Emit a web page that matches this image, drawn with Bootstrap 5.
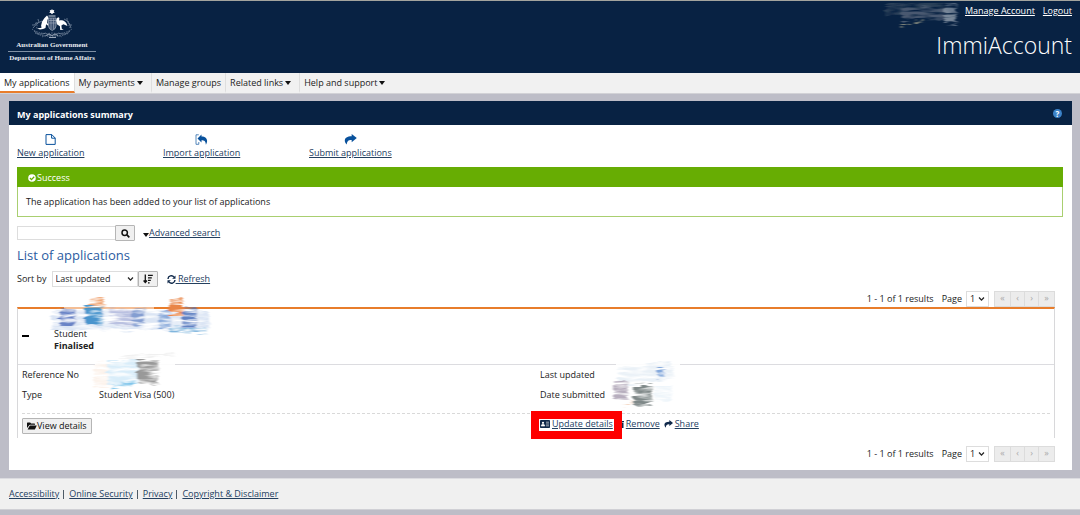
<!DOCTYPE html>
<html lang="en">
<head>
<meta charset="utf-8">
<meta name="viewport" content="width=device-width, initial-scale=1">
<title>ImmiAccount - My applications summary</title>
<link href="https://cdn.jsdelivr.net/npm/bootstrap@5.3.0/dist/css/bootstrap.min.css" rel="stylesheet">
<style>
:root { --navy: #082243; --link: #24405f; --orange: #e87d2b; }
body { font: 9px/12px "Open Sans", "Noto Sans", sans-serif; color: #222; background: #bdbdc7; }
a { color: var(--link); text-underline-offset: 1px; }
svg { display: block; flex: none; }
.site-head { background: var(--navy); border-top: 1px solid #a3a49e; height: 73px; }
.site-head a { color: #fff; }
.crest { width: 88px; padding-top: 8px; color: #e8ecf1; font: bold 7px/11px "Liberation Serif", serif; white-space: nowrap; }
.crest-dept { border-top: 1px solid #8090a4; padding-top: 1px; }
.brand-name { font-size: 23px; line-height: 30px; font-weight: 300; color: #fff; margin-top: 13px; }
.main-nav { background: #f1f1f1; border-bottom: 1px solid #d2d2d6; height: 21px; }
.main-nav .nav-link { color: #222; padding: 4px 4px 2px; height: 20px; border-right: 1px solid #dedede; border-bottom: 2px solid transparent; white-space: nowrap; }
.main-nav .nav-link.active { background: #fff; border-bottom-color: var(--orange); }
.main-nav .menu { padding-right: 8px; }
.main-nav li:last-child .nav-link { border-right: 0; }
.caret { display: inline-block; border: 3px solid transparent; border-top: 4px solid #111; border-bottom: 0; margin-left: 2px; vertical-align: 1px; }
.panel { background: #fff; margin: 7px 8px 0 9px; padding-bottom: 8px; }
.panel-head { background: var(--navy); color: #fff; height: 24px; padding: 0 10px 0 8px; }
.panel-head h1 { font-size: 9px; line-height: 12px; font-weight: 700; margin: 4px 0 0; }
.help { width: 9px; height: 9px; border-radius: 50%; background: #3b82c9; color: #fff; font-size: 8px; line-height: 9px; font-weight: 700; text-align: center; border: 0; padding: 0; }
.panel-body { padding: 9px 9px 0 8px; }
.action { width: 146px; padding-bottom: 8px; }
.action a { display: inline-flex; flex-direction: column; align-items: center; gap: 2px; white-space: nowrap; }
.action svg { color: #08519c; }
.notice { border: 1px solid #a9cf70; }
.notice-head { background: #67ad03; color: #fff; height: 20px; margin: -1px -1px 0; padding: 1px 11px 0; gap: 1px; }
.notice-text { padding: 9px 8px 8px; }
.search-box { width: 98px; height: 14px; border: 1px solid #ddd; border-right: 0; padding: 0 4px; font-size: 9px; }
.tool-btn { border: 1px solid #b5b5b5; border-radius: 1px; background: #f0f0f0; color: #111; height: 16px; line-height: 12px; padding: 0 4px; font-size: 9px; display: inline-flex; align-items: center; justify-content: center; }
.icon-btn { width: 20px; }
.list-title { font-size: 13px; line-height: 18px; font-weight: 400; color: #2b5c9f; margin: 5px 0 7px; }
.pick { appearance: none; border: 1px solid #ddd; border-radius: 0; height: 16px; font-size: 9px; line-height: 12px; padding: 0 3px; color: #222; background: #fff; }
.pick-wrap { display: grid; align-items: center; }
.pick-wrap > * { grid-area: 1 / 1; }
.pick-wrap svg { justify-self: end; margin-right: 4px; pointer-events: none; }
.sort-pick { width: 86px; }
.sort-row { gap: 5px; }
.page-pick { width: 23px; }
.pager-row { margin-right: 8px; height: 16px; }
.pager { margin-left: 6px; }
.pager button { width: 15px; height: 16px; border: 1px solid #dcdcdc; background: #ececec; color: #aaa; padding: 0 0 2px; font-size: 9px; line-height: 12px; margin-left: -1px; }
.pager button:first-child, .pager button:last-child { width: 17px; }
.results { border: 1px solid #d8d8da; border-top: 2px solid var(--orange); border-bottom: 0; margin-right: 8px; position: relative; }
.result-head { height: 55px; padding: 19px 5px 0 4px; gap: 25px; }
.toggle { width: 7px; height: 9px; border: 0; border-bottom: 2px solid #000; background: none; padding: 0; }
.result-body { border-top: 1px solid #dcdce0; padding: 0 4px; }
.facts { padding: 0 0 8px; }
.facts dl { margin: 0; display: grid; grid-template-columns: 77px 1fr; line-height: 20px; }
.facts dl * { margin: 0; font-weight: 400; }
.facts dd { min-height: 20px; }
.actions-row { border-top: 1px dashed #d9d9d9; padding: 4px 0; min-height: 25px; }
.actions-row .item-link { display: inline-flex; align-items: center; gap: 2px; color: var(--link); text-decoration: none; }
.actions-row .item-link span { text-decoration: underline; }
.actions-row .item-link svg { color: #10294a; }
.marker { position: absolute; inset: -7px -9px -9px; border: 8px solid #fe0000; pointer-events: none; }
.smudge { position: absolute; pointer-events: none; }
.site-foot { background: #f0f0f0; border-top: 1px solid #dcdce0; border-bottom: 1px solid #d0d0d5; margin-top: 8px; padding: 0 9px; height: 32px; }
.foot-sep { width: 1px; height: 9px; background: #4d5a66; margin: 0 5px 0 4px; }
</style>
</head>
<body>
<svg width="0" height="0" class="position-absolute" aria-hidden="true">
  <defs>
    <filter id="rough" x="-10%" y="-20%" width="120%" height="140%">
      <feTurbulence type="fractalNoise" baseFrequency="0.05 0.35" numOctaves="3" seed="4" result="n"/>
      <feDisplacementMap in="SourceGraphic" in2="n" scale="9" xChannelSelector="R" yChannelSelector="G" result="d"/>
      <feColorMatrix in="n" type="matrix" values="0 0 0 0 0  0 0 0 0 0  0 0 0 0 0  2.6 0 0 0 -0.6" result="m"/>
      <feComposite in="d" in2="m" operator="in" result="c"/>
      <feGaussianBlur in="c" stdDeviation="0.8 0.5"/>
    </filter>
    <symbol id="i-share" viewBox="0 0 16 14"><path fill="currentColor" d="M9.500 0 16 5.200 9.500 10.400V7.600C5.500 7.400 3.600 8.800 3.200 13.500 -1.800 8 1 2.800 9.500 2.800Z"/></symbol>
    <symbol id="i-down" viewBox="0 0 8 6"><path d="M1.200 1.300 4 4.300 6.800 1.300" fill="none" stroke="#222" stroke-width="1.500"/></symbol>
  </defs>
</svg>

<header class="site-head d-flex justify-content-between position-relative">
  <div class="crest ms-2 text-center">
    <svg class="mx-auto" width="42" height="31" viewBox="0 0 42 31" aria-label="Commonwealth coat of arms">
      <path fill="#fff" d="M21 0l.8 1.300 1.500-.2-.5 1.400.9 1.200-1.500.2L21 5.200l-1.200-1.300-1.500-.2.9-1.200-.5-1.400 1.500.2z"/>
      <path fill="none" stroke="#cbd3dd" stroke-width="1" d="M17.500 7h7"/>
      <path fill="#fff" d="M15 7.500l1-1 1 1.300.8 2-1.300.6-.3 3.600 1.800 2-1.300.5-1.600-1.200-.6 3.600L12 20l-3 .5-3-1 4.500-.8-.4-2.200 1-4 2.400-3.500z"/>
      <path fill="#fff" d="M25.800 9.200l1.500-1 1.100.7-.3 2.600c3-1 7.500.5 8.300 5.500l-4-1.700-2 1.200.4 3.200 1.900 1-3.500.3-.3-3.800-3-2-.9-3.600z"/>
      <path fill="#3d5272" stroke="#a9b4c3" stroke-width=".7" d="M17.500 9h7.500v8q0 3-3.800 4.500-3.700-1.500-3.700-4.500z"/>
      <path stroke="#a9b4c3" stroke-width=".6" d="M17.500 14H25M20 9v11M22.600 9v11M18 11.500h7"/>
      <g fill="none" stroke="#74859c" stroke-width=".8">
        <path d="M2 19q4-6 9-7M3 22q5 5 12 2M40 19q-2-7-7-9M39 22q-5 5-12 2M1 16q3 1 4-2M41 16q-3 1-3-2M7 10q2 3-1 5M36 9q-1 3 2 4"/>
        <path stroke-dasharray="1.500 1" d="M1 20q8 6 20 4 12 2 20-4M4 24q8 4 17 3 9 1 17-3M5 13q2 4 0 7M37 13q1 4 2 6M11 28q5-3 10-1 5-2 10 1"/>
      </g>
      <path fill="none" stroke="#9ba8b9" stroke-width="1" d="M15 26.500q3-3 6 0 3-3 6 0M18 28.500h7"/>
    </svg>
    <div>Australian Government</div>
    <div class="crest-dept">Department of Home Affairs</div>
  </div>
  <div class="text-end pe-2 pt-1">
    <div class="d-flex justify-content-end gap-2"><a href="#">Manage Account</a><a href="#">Logout</a></div>
    <div class="brand-name">ImmiAccount</div>
  </div>
  <svg class="smudge" width="150" height="30" viewBox="0 0 150 30" style="top:0;right:70px" aria-hidden="true">
    <g filter="url(#rough)" fill="none">
      <path stroke="#2b4059" stroke-width="16" d="M26 6q20 2 64 2"/>
      <path stroke="#48596f" stroke-width="13" d="M42 13q20-4 54 3"/>
      <path stroke="#8492a4" stroke-width="21" d="M85 13h12" opacity=".8"/>
      <path stroke="#8c8f80" stroke-width="2" d="M40 25l24-5"/>
    </g>
  </svg>
</header>

<nav class="main-nav" aria-label="Main">
  <ul class="nav flex-nowrap">
    <li><a class="nav-link active" href="#">My applications</a></li>
    <li><a class="nav-link menu" href="#">My payments<span class="caret"></span></a></li>
    <li><a class="nav-link" href="#">Manage groups</a></li>
    <li><a class="nav-link menu" href="#">Related links<span class="caret"></span></a></li>
    <li><a class="nav-link menu" href="#">Help and support<span class="caret"></span></a></li>
  </ul>
</nav>

<main class="panel">
  <div class="panel-head d-flex align-items-center justify-content-between">
    <h1>My applications summary</h1>
    <button class="help" type="button" aria-label="Help">?</button>
  </div>
  <div class="panel-body">
    <div class="d-flex">
      <div class="action"><a href="#">
        <svg width="11" height="11" viewBox="0 0 11 11"><path d="M1 .6h5.800L10.200 4v6.400H1zM6.600 .6v3.600h3.600" fill="none" stroke="currentColor"/></svg>
        New application</a></div>
      <div class="action"><a href="#">
        <svg width="13" height="11" viewBox="0 0 13 11"><path fill="currentColor" d="M6.500 .4 2.500 4.400 6.500 8.400V6.300c2.800 0 4.200.8 4.400 4.400 2.600-3.900 1-8.200-4.400-8.200z"/><path d="M3.800 .8H1v9.500h2.800V8" fill="none" stroke="currentColor" stroke-width=".9" opacity=".75"/></svg>
        Import application</a></div>
      <div class="action"><a href="#">
        <svg width="13" height="11"><use href="#i-share"/></svg>
        Submit applications</a></div>
    </div>

    <section class="notice">
      <div class="notice-head d-flex align-items-center">
        <svg width="8" height="8" viewBox="0 0 8 8"><circle cx="4" cy="4" r="3.800" fill="#fff"/><path d="M2 4l1.500 1.600L6.200 2.800" fill="none" stroke="#67ad03" stroke-width="1.300"/></svg>
        <span>Success</span>
      </div>
      <div class="notice-text">The application has been added to your list of applications</div>
    </section>

    <form class="d-flex align-items-center pt-2">
      <input class="search-box" type="text" aria-label="Search applications">
      <button class="tool-btn icon-btn" type="button" aria-label="Search"><svg width="9" height="9" viewBox="0 0 9 9"><circle cx="3.700" cy="3.700" r="2.700" fill="none" stroke="currentColor" stroke-width="1.500"/><path d="M5.700 5.700 8.300 8.300" stroke="currentColor" stroke-width="1.700"/></svg></button>
      <a class="ms-2 d-inline-flex align-items-center" href="#"><span class="caret mt-1 ms-0"></span>Advanced search</a>
    </form>

    <h2 class="list-title">List of applications</h2>

    <div class="sort-row d-flex align-items-center">
      <label for="sort">Sort by</label>
      <span class="d-flex">
        <span class="pick-wrap"><select class="pick sort-pick" id="sort"><option>Last updated</option></select><svg width="7" height="6"><use href="#i-down"/></svg></span>
        <button class="tool-btn icon-btn" type="button" aria-label="Sort order"><svg width="10" height="10" viewBox="0 0 10 10" fill="none" stroke="currentColor"><path stroke-width="1.300" d="M2.300 .5v8M.6 6.500l1.700 2 1.700-2M5 1.300h4.800M5 3.800h3.800M5 6.300h2.800M5 8.800h1.600"/></svg></button>
      </span>
      <a class="ms-1 d-inline-flex align-items-center" href="#"><svg width="9" height="9" viewBox="0 0 9 9"><path d="M1 4A3.300 3.300 0 0 1 7 2.200M8 5A3.300 3.300 0 0 1 2 6.800" fill="none" stroke="#10294a" stroke-width="1.400"/><path d="M8.500 .5v3.300H5.200zM.5 8.500V5.200h3.300z" fill="#10294a"/></svg>&nbsp;Refresh</a>
    </div>

    <div class="pager-row d-flex align-items-center justify-content-end mt-1">
      <span>1 - 1 of 1 results</span>
      <label for="page-top" class="ms-2 me-1">Page</label>
      <span class="pick-wrap"><select class="pick page-pick" id="page-top"><option>1</option></select><svg width="7" height="6"><use href="#i-down"/></svg></span>
      <span class="pager d-flex"><button type="button" disabled>«</button><button type="button" disabled>‹</button><button type="button" disabled>›</button><button type="button" disabled>»</button></span>
    </div>

    <section class="results">
      <div class="result-head d-flex">
        <button class="toggle" type="button" aria-label="Collapse"></button>
        <div><div>Student</div><strong>Finalised</strong></div>
      </div>
      <div class="result-body">
        <div class="row g-0 facts">
          <dl class="col-6"><dt>Reference No</dt><dd></dd><dt>Type</dt><dd>Student Visa (500)</dd></dl>
          <dl class="col-6 ps-1"><dt>Last updated</dt><dd></dd><dt>Date submitted</dt><dd></dd></dl>
        </div>
        <div class="row g-0 actions-row">
          <div class="col-6"><button class="tool-btn" type="button"><svg width="10" height="8" viewBox="0 0 10 8"><path fill="currentColor" d="M0 6V1q0-.6.6-.6h2.600l.9 1h3.300q.6 0 .6.6v.8H3q-.7 0-1 .6zM.6 7.500 2.500 4q.2-.4.7-.4h6.600L8.100 7q-.3.5-.9.5z"/></svg>View details</button></div>
          <div class="col-6 ps-1 d-flex align-items-start gap-1">
            <a class="item-link position-relative" href="#"><svg width="10" height="8" viewBox="0 0 10 8"><rect width="10" height="8" rx=".8" fill="currentColor"/><circle cx="3" cy="2.800" r="1.100" fill="#fff"/><path d="M1.200 6q0-1.700 1.800-1.700T4.800 6zM6 2.200h3M6 4h3M6 5.800h3" fill="#fff" stroke="#fff" stroke-width=".6"/></svg><span>Update details</span><i class="marker"></i></a>
            <a class="item-link" href="#"><svg width="7" height="8" viewBox="0 0 7 8"><path fill="currentColor" d="M0 1h2V0h3v1h2v1H0zM.5 2.500h6V8h-6z"/></svg><span>Remove</span></a>
            <a class="item-link" href="#"><svg width="9" height="8"><use href="#i-share"/></svg><span>Share</span></a>
          </div>
        </div>
      </div>

      <svg class="smudge" style="left:22px;top:-12px" width="180" height="42" viewBox="0 0 180 42" aria-hidden="true">
        <path d="M24 9h90v3H24z" fill="#fff" opacity=".5"/>
        <g filter="url(#rough)" fill="none">
          <path stroke="#dbe5f4" stroke-width="19" d="M12 23h158"/>
          <path stroke="#5572bd" stroke-width="18" d="M20 20h16" opacity=".85"/>
          <path stroke="#2f86c6" stroke-width="19" d="M46 18h17" opacity=".85"/>
          <path stroke="#a4a9d3" stroke-width="17" d="M69 20h24" opacity=".6"/>
          <path stroke="#6e8cc8" stroke-width="17" d="M93 20h12" opacity=".8"/>
          <path stroke="#789dd5" stroke-width="16" d="M119 23h12" opacity=".8"/>
          <path stroke="#4a70ba" stroke-width="19" d="M142 20h15" opacity=".85"/>
          <path stroke="#80b5dd" stroke-width="5" d="M130 33h36"/>
          <path stroke="#f0a676" stroke-width="9" d="M49 5h16"/>
          <path stroke="#e98546" stroke-width="18" d="M130 9h13"/>
        </g>
      </svg>
      <svg class="smudge" style="left:72px;top:42px" width="92" height="44" viewBox="0 0 92 44" aria-hidden="true">
        <path fill="#fff" opacity=".9" d="M5 8h80v15H5z"/>
        <g filter="url(#rough)" fill="none">
          <path stroke="#fcf3ec" stroke-width="25" d="M4 24h18"/>
          <path stroke="#d9edf9" stroke-width="26" d="M18 22h32"/>
          <path stroke="#7ec4ea" stroke-width="5" d="M22 36l24-4"/>
          <path stroke="#8e8e8e" stroke-width="24" d="M48 21h20" opacity=".9"/>
          <path stroke="#f0f0f0" stroke-width="3" d="M28 6l56-3"/>
        </g>
      </svg>
      <svg class="smudge" style="left:590px;top:50px" width="80" height="56" viewBox="0 0 80 56" aria-hidden="true">
        <path fill="#fff" opacity=".9" d="M8 2h64v12H8z"/>
        <g filter="url(#rough)" fill="none">
          <path stroke="#eaf1f7" stroke-width="18" d="M10 18l55-8"/>
          <path stroke="#83a8db" stroke-width="10" d="M50 14h7"/>
          <path stroke="#b7aebe" stroke-width="20" d="M6 30h14"/>
          <path stroke="#7f8888" stroke-width="20" d="M26 36h18"/>
          <path stroke="#eef5fa" stroke-width="16" d="M46 35h18"/>
          <path stroke="#efc7ac" stroke-width="2" d="M15 48l10-5"/>
        </g>
      </svg>
    </section>

    <div class="pager-row d-flex align-items-center justify-content-end mt-2">
      <span>1 - 1 of 1 results</span>
      <label for="page-bottom" class="ms-2 me-1">Page</label>
      <span class="pick-wrap"><select class="pick page-pick" id="page-bottom"><option>1</option></select><svg width="7" height="6"><use href="#i-down"/></svg></span>
      <span class="pager d-flex"><button type="button" disabled>«</button><button type="button" disabled>‹</button><button type="button" disabled>›</button><button type="button" disabled>»</button></span>
    </div>
  </div>
</main>

<footer class="site-foot d-flex align-items-center">
  <a href="#">Accessibility</a><span class="foot-sep"></span>
  <a href="#">Online Security</a><span class="foot-sep"></span>
  <a href="#">Privacy</a><span class="foot-sep"></span>
  <a href="#">Copyright &amp; Disclaimer</a>
</footer>
<script src="https://cdn.jsdelivr.net/npm/bootstrap@5.3.0/dist/js/bootstrap.bundle.min.js"></script>
</body>
</html>
